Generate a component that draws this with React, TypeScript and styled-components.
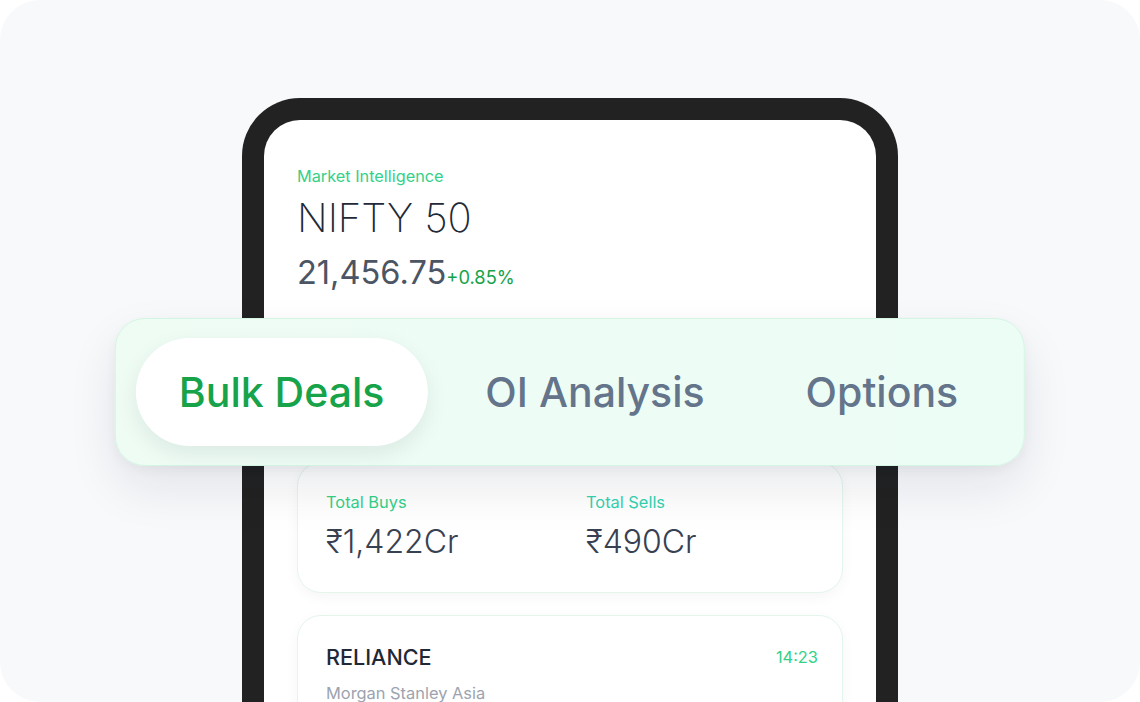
import React from 'react';
import styled, { createGlobalStyle } from 'styled-components';

const GlobalStyle = createGlobalStyle`
  html, body {
    margin: 0;
    padding: 0;
    background: #ffffff;
  }

  body {
    font-family: Inter, "Noto Sans", "Liberation Sans", sans-serif;
    -webkit-font-smoothing: antialiased;
  }
`;

const Stage = styled.div`
  position: relative;
  width: 1140px;
  height: 702px;
  overflow: hidden;
  border-radius: 40px;
  background: #f8f9fb;
  display: flex;
  flex-flow: column nowrap;
  align-items: center;
  padding-top: 98px;
  box-sizing: border-box;
`;

const Phone = styled.div`
  flex: none;
  width: 656px;
  height: 680px;
  box-sizing: border-box;
  padding: 22px;
  border-radius: 58px;
  background: #222222;
`;

const Screen = styled.div`
  height: 100%;
  border-radius: 36px;
  background: #ffffff;
  padding: 46px 33px 0;
  box-sizing: border-box;
  display: flex;
  flex-flow: column nowrap;
`;

const Eyebrow = styled.div`
  font-size: 16.3px;
  line-height: 20px;
  color: #34d189;
`;

const IndexName = styled.div`
  margin-top: 8px;
  font-size: 40px;
  line-height: 48px;
  font-weight: 200;
  color: #1f2937;
`;

const PriceRow = styled.div`
  margin-top: 10px;
  display: flex;
  align-items: baseline;
`;

const Price = styled.span`
  font-size: 32.6px;
  line-height: 40px;
  font-weight: 400;
  color: #4b5563;
`;

const Change = styled.span`
  font-size: 18.3px;
  font-weight: 400;
  color: #16a34a;
`;

const Card = styled.div<{ $gap: number }>`
  margin-top: ${p => p.$gap}px;
  border-radius: 24px;
  border: 1.5px solid #e3f6ec;
  background: #ffffff;
  box-shadow: 0 4px 14px rgba(15, 23, 42, 0.04);
  box-sizing: border-box;
`;

const TotalsCard = styled(Card)`
  height: 131px;
  padding: 29px 28px 0;
  display: grid;
  grid-template-columns: 1fr 1fr;
  column-gap: 32px;
`;

const Stat = styled.div`
  display: flex;
  flex-flow: column nowrap;
`;

const StatLabel = styled.div<{ $color: string }>`
  font-size: 16.4px;
  line-height: 20px;
  color: ${p => p.$color};
`;

const StatValue = styled.div`
  margin-top: 10px;
  font-size: 32px;
  line-height: 40px;
  font-weight: 300;
  color: #374151;
`;

const DealCard = styled(Card)`
  height: 140px;
  padding: 27px 24px 0 28px;
`;

const DealHead = styled.div`
  display: flex;
  justify-content: space-between;
  align-items: center;
`;

const Ticker = styled.div`
  font-size: 21.6px;
  line-height: 28px;
  font-weight: 500;
  color: #1f2937;
`;

const Time = styled.div`
  font-size: 16.4px;
  color: #34d189;
`;

const Party = styled.div`
  margin-top: 12px;
  font-size: 16.4px;
  line-height: 20px;
  color: #9ca3af;
`;

const TabBar = styled.div`
  position: absolute;
  top: 318px;
  left: 50%;
  transform: translateX(-50%);
  display: flex;
  align-items: center;
  gap: 15px;
  padding: 19px 23px 19px 20px;
  border-radius: 30px;
  border: 1.5px solid #d3f5e2;
  background: linear-gradient(90deg, #eefcf4 0%, #ecfdf6 100%);
  box-shadow: 0 22px 50px rgba(15, 23, 42, 0.09), 0 4px 12px rgba(15, 23, 42, 0.04);
`;

const Tab = styled.div<{ $active?: boolean }>`
  height: 108px;
  padding: 0 43px;
  display: flex;
  align-items: center;
  border-radius: 54px;
  font-size: 41px;
  font-weight: 500;
  white-space: nowrap;
  color: ${p => (p.$active ? '#16a34a' : '#64748b')};
  background: ${p => (p.$active ? '#ffffff' : 'transparent')};
  box-shadow: ${p => (p.$active ? '0 8px 22px rgba(15, 23, 42, 0.08)' : 'none')};
`;

const tabs = ['Bulk Deals', 'OI Analysis', 'Options'];

export default function App() {
  return (
    <>
      <GlobalStyle />
      <Stage>
        <Phone>
          <Screen>
            <Eyebrow>Market Intelligence</Eyebrow>
            <IndexName>NIFTY 50</IndexName>
            <PriceRow>
              <Price>21,456.75</Price>
              <Change>+0.85%</Change>
            </PriceRow>

            <TotalsCard $gap={170}>
              <Stat>
                <StatLabel $color="#34d189">Total Buys</StatLabel>
                <StatValue>₹1,422Cr</StatValue>
              </Stat>
              <Stat>
                <StatLabel $color="#33d3b0">Total Sells</StatLabel>
                <StatValue>₹490Cr</StatValue>
              </Stat>
            </TotalsCard>

            <DealCard $gap={22}>
              <DealHead>
                <Ticker>RELIANCE</Ticker>
                <Time>14:23</Time>
              </DealHead>
              <Party>Morgan Stanley Asia</Party>
            </DealCard>
          </Screen>
        </Phone>

        <TabBar>
          {tabs.map((t, i) => (
            <Tab key={t} $active={i === 0}>
              {t}
            </Tab>
          ))}
        </TabBar>
      </Stage>
    </>
  );
}
